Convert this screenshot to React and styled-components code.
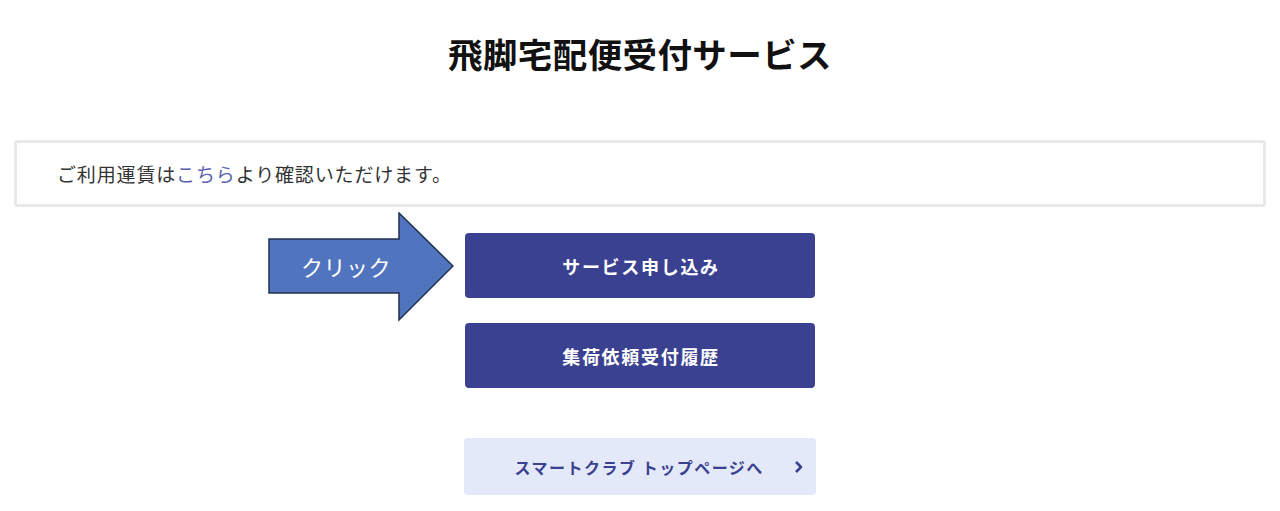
import React from 'react'
import styled, { createGlobalStyle } from 'styled-components'

const GlobalStyle = createGlobalStyle`
  html, body {
    margin: 0;
    padding: 0;
    background: #ffffff;
  }
  body {
    font-family: "Noto Sans CJK JP", "Noto Sans", sans-serif;
    color: #333333;
  }
`

const Page = styled.div`
  display: flex;
  flex-direction: column;
  align-items: center;
  padding: 29px 14px 0 14px;
`

const Title = styled.h1`
  margin: 0;
  font-size: 34.5px;
  line-height: 49px;
  font-weight: 700;
  color: #111111;
  letter-spacing: 0.4px;
`

const Notice = styled.div`
  box-sizing: border-box;
  align-self: stretch;
  margin-top: 62px;
  height: 67px;
  border: 3px solid #e9e9e7;
  border-radius: 3px;
  display: flex;
  align-items: center;
  padding: 0 40px;
  font-size: 19px;
  letter-spacing: 0.85px;
  color: #333333;
`

const Link = styled.a`
  color: #5a5fb0;
  text-decoration: none;
`

const Actions = styled.div`
  position: relative;
  width: 350px;
  margin-top: 26px;
  display: flex;
  flex-direction: column;
  gap: 25px;
`

const Button = styled.div`
  box-sizing: border-box;
  height: 65px;
  border-radius: 4px;
  background: #3b4191;
  color: #ffffff;
  font-size: 18px;
  font-weight: 700;
  display: flex;
  align-items: center;
  justify-content: center;
  letter-spacing: 1.7px;
  padding-left: 2px;
`

const SubButton = styled.div`
  box-sizing: border-box;
  margin-top: 50px;
  margin-left: -1px;
  width: 352px;
  height: 57px;
  border-radius: 4px;
  background: #e3e9f8;
  color: #3b4191;
  font-size: 16px;
  font-weight: 700;
  display: flex;
  align-items: center;
  padding: 0 11px 0 51px;
  letter-spacing: 1.5px;
`

const SubLabel = styled.span`
  flex: 1;
`

const Arrow = styled.div`
  position: absolute;
  left: -197px;
  top: -21px;
  width: 186px;
  height: 110px;
`

const ArrowLabel = styled.span`
  position: absolute;
  left: 33px;
  top: 38px;
  font-size: 22px;
  line-height: 32px;
  color: #ffffff;
  font-weight: 400;
  letter-spacing: 0.5px;
`

const Chevron = () => (
  <svg width="12" height="14" viewBox="0 0 12 14">
    <path d="M3 2 L8 7 L3 12" fill="none" stroke="#3b4191" strokeWidth="2.6" strokeLinejoin="round" />
  </svg>
)

export default function App () {
  return (
    <>
      <GlobalStyle />
      <Page>
        <Title>飛脚宅配便受付サービス</Title>
        <Notice>
          <span>ご利用運賃は<Link href='#'>こちら</Link>より確認いただけます。</span>
        </Notice>
        <Actions>
          <Arrow>
            <svg width="186" height="110" viewBox="0 0 186 110">
              <polygon
                points="1,27 131,27 131,1 185,54 131,108 131,81 1,81"
                fill="#5174be"
                stroke="#22304f"
                strokeWidth="1.5"
                strokeLinejoin="miter"
              />
            </svg>
            <ArrowLabel>クリック</ArrowLabel>
          </Arrow>
          <Button>サービス申し込み</Button>
          <Button>集荷依頼受付履歴</Button>
        </Actions>
        <SubButton>
          <SubLabel>スマートクラブ トップページへ</SubLabel>
          <Chevron />
        </SubButton>
      </Page>
    </>
  )
}
